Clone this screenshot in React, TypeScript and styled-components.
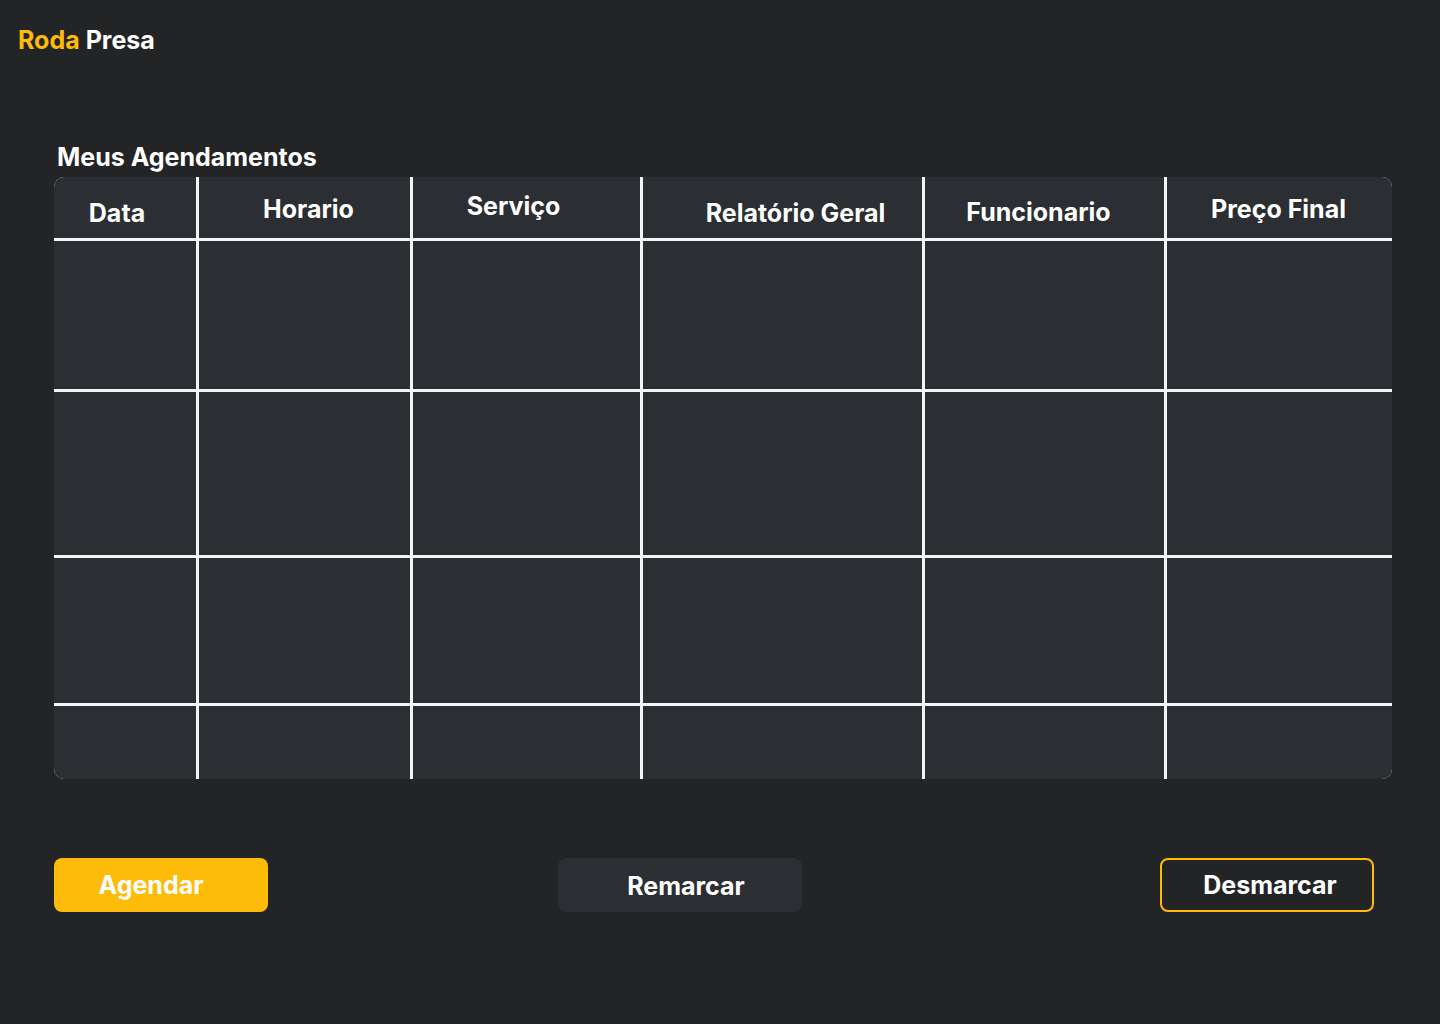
import React from "react";
import styled, { createGlobalStyle } from "styled-components";

const GlobalStyle = createGlobalStyle`
  html, body {
    margin: 0;
    padding: 0;
    background: #232426;
  }
  body {
    font-family: Inter, "Noto Sans", "Liberation Sans", sans-serif;
    color: #ffffff;
  }
  * { box-sizing: border-box; }
`;

const Page = styled.div`
  width: 1440px;
  min-height: 1024px;
  background: #232426;
  display: flex;
  flex-direction: column;
  padding: 24px 48px 0 54px;
`;

const Logo = styled.div`
  font-size: 25px;
  font-weight: 700;
  line-height: 32px;
  margin-left: -36px;
`;

const LogoAccent = styled.span`
  color: #ffbb0a;
`;

const Title = styled.h2`
  margin: 81px 0 0 3px;
  font-size: 25px;
  font-weight: 700;
  line-height: 40px;
`;

const Panel = styled.div`
  width: 1338px;
  height: 602px;
  border-radius: 10px;
  overflow: hidden;
  display: grid;
  grid-template-columns: 142px 211px 227px 279px 239px 1fr;
  grid-template-rows: 61px 148px 163px 145px 1fr;
  gap: 3px;
  background: #f4f4f4;
`;

const HeadCell = styled.div<{ $dx: number; $dy: number }>`
  background: #2b2f33;
  display: flex;
  align-items: center;
  justify-content: center;
  font-size: 25px;
  font-weight: 700;
  padding-left: ${(p) => Math.max(p.$dx, 0) * 2}px;
  padding-right: ${(p) => Math.max(-p.$dx, 0) * 2}px;
  padding-top: ${(p) => Math.max(p.$dy, 0) * 2}px;
  padding-bottom: ${(p) => Math.max(-p.$dy, 0) * 2}px;
`;

const Cell = styled.div`
  background: #2b2f33;
`;

const ButtonRow = styled.div`
  display: flex;
  align-items: center;
  margin-top: 79px;
  padding-right: 18px;
`;

const Button = styled.button<{
  $variant: "primary" | "secondary" | "outline";
  $width: number;
  $shift: number;
  $lift?: number;
}>`
  width: ${(p) => p.$width}px;
  height: 54px;
  border-radius: 8px;
  font-family: Inter, "Noto Sans", "Liberation Sans", sans-serif;
  font-size: 25px;
  font-weight: 700;
  color: #ffffff;
  cursor: pointer;
  display: flex;
  align-items: center;
  justify-content: center;
  padding: 0;
  padding-left: ${(p) => Math.max(p.$shift, 0) * 2}px;
  padding-right: ${(p) => Math.max(-p.$shift, 0) * 2}px;
  padding-top: ${(p) => (p.$lift ?? 0) * 2}px;
  background: ${(p) =>
    p.$variant === "primary"
      ? "#ffbb0a"
      : p.$variant === "secondary"
      ? "#2b2f33"
      : "transparent"};
  border: ${(p) => (p.$variant === "outline" ? "2px solid #ffbb0a" : "none")};
`;

const Spacer = styled.div<{ $w?: number }>`
  ${(p) => (p.$w ? `width: ${p.$w}px;` : "flex: 1;")}
`;

const headers: { label: string; dx: number; dy: number }[] = [
  { label: "Data", dx: -8, dy: 5.5 },
  { label: "Horario", dx: 4, dy: 1.5 },
  { label: "Serviço", dx: -13, dy: -1.5 },
  { label: "Relatório Geral", dx: 13, dy: 5.5 },
  { label: "Funcionario", dx: -6, dy: 4.5 },
  { label: "Preço Final", dx: -1, dy: 1.5 },
];

export default function App() {
  const bodyCells = Array.from({ length: 24 });
  return (
    <>
      <GlobalStyle />
      <Page>
        <Logo>
          <LogoAccent>Roda</LogoAccent> Presa
        </Logo>
        <Title>Meus Agendamentos</Title>
        <Panel>
          {headers.map((h) => (
            <HeadCell key={h.label} $dx={h.dx} $dy={h.dy}>
              {h.label}
            </HeadCell>
          ))}
          {bodyCells.map((_, i) => (
            <Cell key={i} />
          ))}
        </Panel>
        <ButtonRow>
          <Button $variant="primary" $width={214} $shift={-10}>
            Agendar
          </Button>
          <Spacer $w={290} />
          <Button $variant="secondary" $width={244} $shift={6} $lift={0.5}>
            Remarcar
          </Button>
          <Spacer />
          <Button $variant="outline" $width={214} $shift={3}>
            Desmarcar
          </Button>
        </ButtonRow>
      </Page>
    </>
  );
}
